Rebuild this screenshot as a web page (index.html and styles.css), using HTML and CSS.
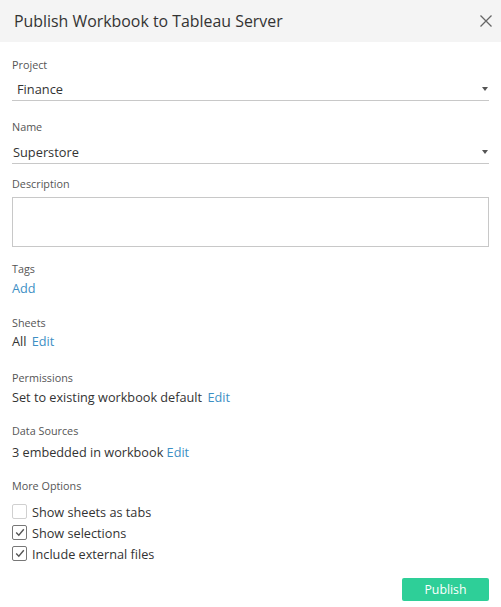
FILE: index.html
```html
<!DOCTYPE html>
<html>
<head>
<meta charset="utf-8">
<link rel="stylesheet" href="styles.css">
</head>
<body>
<div class="dialog">
  <div class="header">
    <span class="title">Publish Workbook to Tableau Server</span>
    <svg class="close" width="12" height="12" viewBox="0 0 12 12"><path d="M0.5 0.5L11.5 11.5M11.5 0.5L0.5 11.5" stroke="#666" stroke-width="1.3" fill="none"/></svg>
  </div>
  <div class="content">
    <div class="label first">Project</div>
    <div class="select project"><span>Finance</span><span class="arrow"></span></div>

    <div class="label name-label">Name</div>
    <div class="select name"><span>Superstore</span><span class="arrow"></span></div>

    <div class="label desc-label">Description</div>
    <div class="textarea"></div>

    <div class="label tags-label">Tags</div>
    <div class="value tags-value"><a class="link">Add</a></div>

    <div class="label sheets-label">Sheets</div>
    <div class="value sheets-value">All <a class="link gap">Edit</a></div>

    <div class="label perm-label">Permissions</div>
    <div class="value perm-value">Set to existing workbook default <a class="link gap">Edit</a></div>

    <div class="label ds-label">Data Sources</div>
    <div class="value ds-value">3 embedded in workbook <a class="link">Edit</a></div>

    <div class="label opts-label">More Options</div>
    <div class="checks">
      <div class="check"><span class="box"></span>Show sheets as tabs</div>
      <div class="check"><span class="box on"><svg width="10" height="9" viewBox="0 0 10 9"><path d="M1.2 4.6L3.8 7.2L8.8 1.2" stroke="#555" stroke-width="1.4" fill="none"/></svg></span>Show selections</div>
      <div class="check"><span class="box on"><svg width="10" height="9" viewBox="0 0 10 9"><path d="M1.2 4.6L3.8 7.2L8.8 1.2" stroke="#555" stroke-width="1.4" fill="none"/></svg></span>Include external files</div>
    </div>
    <div class="footer"><button class="publish">Publish</button></div>
  </div>
</div>
</body>
</html>
```
FILE: styles.css
```css
* { box-sizing: border-box; }
body {
  margin: 0;
  background: #fff;
  font-family: "Open Sans", "Liberation Sans", sans-serif;
  color: #333;
}
.dialog { width: 501px; height: 607px; background: #fff; }
.header {
  height: 42px;
  background: #f4f4f4;
  display: flex;
  align-items: center;
  justify-content: space-between;
  padding: 0 9px 0 14px;
}
.title { font-size: 15.9px; color: #333; }
.close { display: block; }
.content { padding: 0 12px; }
.label { font-size: 10.8px; line-height: 14px; color: #555; }
.first { margin-top: 16px; }
.select {
  height: 24px;
  border-bottom: 1px solid #c8c8c8;
  display: flex;
  align-items: center;
  justify-content: space-between;
  font-size: 12.8px;
  padding-right: 1px;
}
.project { margin-top: 5px; padding-left: 5px; }
.name { margin-top: 6px; padding-left: 1px; }
.arrow {
  width: 0; height: 0;
  border-left: 3.5px solid transparent;
  border-right: 3.5px solid transparent;
  border-top: 4px solid #555;
}
.name-label { margin-top: 19px; }
.desc-label { margin-top: 13px; }
.textarea {
  margin-top: 6px;
  height: 50px;
  border: 1px solid #c8c8c8;
}
.tags-label { margin-top: 15px; }
.value { font-size: 12.7px; line-height: 18px; color: #333; }
.tags-value { margin-top: 3px; }
.sheets-label { margin-top: 19px; }
.sheets-value { margin-top: 2px; }
.perm-label { margin-top: 21px; }
.perm-value { margin-top: 3px; }
.ds-label { margin-top: 18px; }
.ds-value { margin-top: 5px; }
.opts-label { margin-top: 18px; }
.link { color: #3d8fc4; cursor: pointer; }
.gap { margin-left: 2px; }
.checks { margin-top: 8px; display: flex; flex-direction: column; }
.check {
  height: 21px;
  display: flex;
  align-items: center;
  font-size: 12.7px;
  color: #333;
}
.box {
  width: 15px; height: 15px;
  border: 1px solid #d0d0d0;
  border-radius: 2px;
  margin-right: 5px;
  display: flex;
  align-items: center;
  justify-content: center;
}
.box.on { border-color: #777; }
.footer { display: flex; justify-content: flex-end; margin-top: 14px; }
.publish {
  width: 87px;
  height: 23px;
  background: #2ecf98;
  border: none;
  border-radius: 2px;
  color: #fff;
  font-family: inherit;
  font-size: 12.3px;
  padding: 0;
}
```
